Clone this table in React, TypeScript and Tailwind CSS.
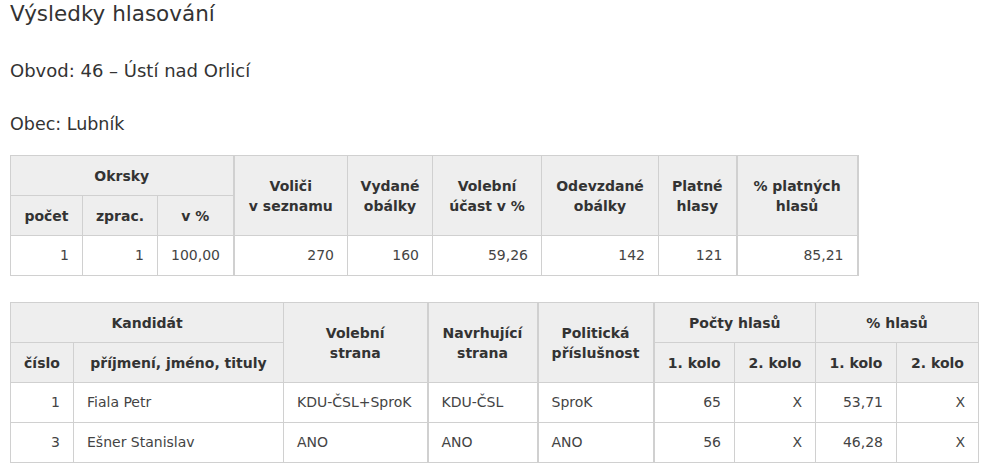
const okrskyRow = { pocet: "1", zprac: "1", pct: "100,00", volici: "270", vydane: "160", ucast: "59,26", odevzdane: "142", platne: "121", pctPlatnych: "85,21" };

const kandidati = [
  { cislo: "1", jmeno: "Fiala Petr", volebni: "KDU-ČSL+SproK", navrhujici: "KDU-ČSL", politicka: "SproK", hlasy1: "65", hlasy2: "X", pct1: "53,71", pct2: "X" },
  { cislo: "3", jmeno: "Ešner Stanislav", volebni: "ANO", navrhujici: "ANO", politicka: "ANO", hlasy1: "56", hlasy2: "X", pct1: "46,28", pct2: "X" },
];

const th = "border border-[#d0d0d0] bg-[#eeeeee] text-center align-middle font-bold text-[#333] leading-5 px-1";
const td = "border border-[#d0d0d0] h-10 px-[13px] align-middle text-[#444]";

export default function App() {
  return (
    <div className="min-h-screen bg-white px-[10px] font-['DejaVu_Sans',sans-serif] text-[#333]">
      <h1 className="text-[21.5px] leading-[28px]">Výsledky hlasování</h1>
      <p className="mt-[31px] text-[18px] leading-[24px]">Obvod: 46 – Ústí nad Orlicí</p>
      <p className="mt-[29px] text-[17.5px] leading-[24px]">Obec: Lubník</p>

      <table className="mt-[19px] table-fixed border-collapse text-[14px]" style={{ width: 847 }}>
        <colgroup>
          <col className="w-[72px]" />
          <col className="w-[75px]" />
          <col className="w-[76px]" />
          <col className="w-[114px]" />
          <col className="w-[85px]" />
          <col className="w-[109px]" />
          <col className="w-[117px]" />
          <col className="w-[78px]" />
          <col className="w-[121px]" />
        </colgroup>
        <thead>
          <tr className="h-10">
            <th colSpan={3} className={th}>Okrsky</th>
            <th rowSpan={2} className={`${th} border-l-2`}>Voliči<br />v seznamu</th>
            <th rowSpan={2} className={th}>Vydané<br />obálky</th>
            <th rowSpan={2} className={th}>Volební<br />účast v %</th>
            <th rowSpan={2} className={th}>Odevzdané<br />obálky</th>
            <th rowSpan={2} className={th}>Platné<br />hlasy</th>
            <th rowSpan={2} className={`${th} border-l-2 border-r-2`}>% platných<br />hlasů</th>
          </tr>
          <tr className="h-10">
            <th className={th}>počet</th>
            <th className={th}>zprac.</th>
            <th className={th}>v %</th>
          </tr>
        </thead>
        <tbody>
          <tr>
            <td className={`${td} text-right`}>{okrskyRow.pocet}</td>
            <td className={`${td} text-right`}>{okrskyRow.zprac}</td>
            <td className={`${td} text-right px-[10px]`}>{okrskyRow.pct}</td>
            <td className={`${td} text-right border-l-2`}>{okrskyRow.volici}</td>
            <td className={`${td} text-right`}>{okrskyRow.vydane}</td>
            <td className={`${td} text-right`}>{okrskyRow.ucast}</td>
            <td className={`${td} text-right`}>{okrskyRow.odevzdane}</td>
            <td className={`${td} text-right`}>{okrskyRow.platne}</td>
            <td className={`${td} text-right border-l-2 border-r-2`}>{okrskyRow.pctPlatnych}</td>
          </tr>
        </tbody>
      </table>

      <table className="mt-[26px] table-fixed border-collapse text-[14px]" style={{ width: 968 }}>
        <colgroup>
          <col className="w-[63px]" />
          <col className="w-[210px]" />
          <col className="w-[144px]" />
          <col className="w-[110px]" />
          <col className="w-[116px]" />
          <col className="w-[81px]" />
          <col className="w-[81px]" />
          <col className="w-[81px]" />
          <col className="w-[82px]" />
        </colgroup>
        <thead>
          <tr className="h-10">
            <th colSpan={2} className={th}>Kandidát</th>
            <th rowSpan={2} className={th}>Volební<br />strana</th>
            <th rowSpan={2} className={`${th} border-l-2`}>Navrhující<br />strana</th>
            <th rowSpan={2} className={`${th} border-l-2`}>Politická<br />příslušnost</th>
            <th colSpan={2} className={`${th} border-l-2`}>Počty hlasů</th>
            <th colSpan={2} className={th}>% hlasů</th>
          </tr>
          <tr className="h-10">
            <th className={th}>číslo</th>
            <th className={th}>příjmení, jméno, tituly</th>
            <th className={`${th} border-l-2`}>1. kolo</th>
            <th className={th}>2. kolo</th>
            <th className={th}>1. kolo</th>
            <th className={th}>2. kolo</th>
          </tr>
        </thead>
        <tbody>
          {kandidati.map((k) => (
            <tr key={k.cislo}>
              <td className={`${td} text-right`}>{k.cislo}</td>
              <td className={td}>{k.jmeno}</td>
              <td className={td}>{k.volebni}</td>
              <td className={`${td} border-l-2`}>{k.navrhujici}</td>
              <td className={`${td} border-l-2`}>{k.politicka}</td>
              <td className={`${td} text-right border-l-2`}>{k.hlasy1}</td>
              <td className={`${td} text-right`}>{k.hlasy2}</td>
              <td className={`${td} text-right`}>{k.pct1}</td>
              <td className={`${td} text-right`}>{k.pct2}</td>
            </tr>
          ))}
        </tbody>
      </table>
    </div>
  );
}
